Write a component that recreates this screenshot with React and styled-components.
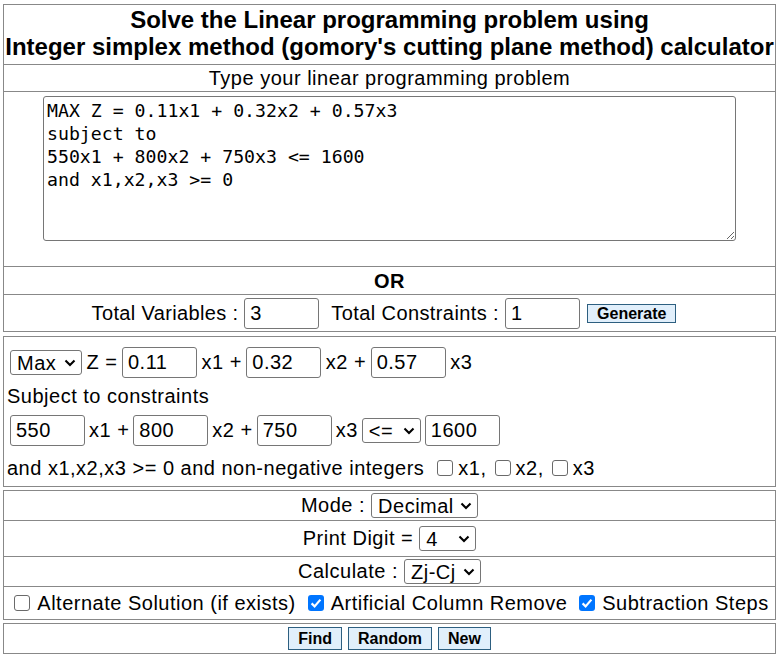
import React from "react"
import styled, { createGlobalStyle } from "styled-components"

const problemText = `MAX Z = 0.11x1 + 0.32x2 + 0.57x3
subject to
550x1 + 800x2 + 750x3 <= 1600
and x1,x2,x3 >= 0`

const Chevron = () => (
  <ChevronSvg viewBox="0 0 12 8" width="12" height="8">
    <path d="M1.5 1.5 L6 6 L10.5 1.5" fill="none" stroke="#000" strokeWidth="2.1" />
  </ChevronSvg>
)

const Dropdown = ({ width, value, options }) => (
  <SelectWrap $width={width}>
    <Select defaultValue={value}>
      {options.map(o => (
        <option key={o}>{o}</option>
      ))}
    </Select>
    <Chevron />
  </SelectWrap>
)

const Check = ({ checked }) => (
  <CheckBox $checked={checked}>
    {checked && (
      <svg viewBox="0 0 16 16" width="16" height="16">
        <path d="M3.6 8.4 L6.6 11.4 L12.4 4.6" fill="none" stroke="#fff" strokeWidth="2.2" />
      </svg>
    )}
  </CheckBox>
)

export default function App() {
  return (
    <>
      <GlobalStyle />
      <Page>
        <Panel>
          <TitleRow>
            Solve the Linear programming problem using
            <br />
            Integer simplex method (gomory's cutting plane method) calculator
          </TitleRow>
          <TextRow $height={26}>Type your linear programming problem</TextRow>
          <AreaRow>
            <ProblemArea defaultValue={problemText} spellCheck={false} />
          </AreaRow>
          <TextRow $height={27} $bold>
            OR
          </TextRow>
          <SizeRow>
            <Label $tight>Total Variables :</Label>
            <NumInput defaultValue="3" />
            <Spaced>Total Constraints :</Spaced>
            <NumInput defaultValue="1" />
            <GenerateButton>Generate</GenerateButton>
          </SizeRow>
        </Panel>

        <Panel $gap={4}>
          <ModelBlock>
            <InputLine $gap={4.5}>
              <Dropdown width={72} value="Max" options={["Max", "Min"]} />
              <span>Z =</span>
              <NumInput defaultValue="0.11" />
              <span>x1 +</span>
              <NumInput defaultValue="0.32" />
              <span>x2 +</span>
              <NumInput defaultValue="0.57" />
              <span>x3</span>
            </InputLine>
            <TextLine $top={6}>Subject to constraints</TextLine>
            <InputLine $top={7} $gap={4}>
              <NumInput defaultValue="550" />
              <span>x1 +</span>
              <NumInput defaultValue="800" />
              <span>x2 +</span>
              <NumInput defaultValue="750" />
              <span>x3</span>
              <Dropdown width={59} value="<=" options={["<=", ">=", "="]} />
              <NumInput defaultValue="1600" />
            </InputLine>
            <TextLine $top={10}>
              <span>and x1,x2,x3 &gt;= 0 and non-negative integers</span>
              <CheckItem $first>
                <Check />x1,
              </CheckItem>
              <CheckItem>
                <Check />x2,
              </CheckItem>
              <CheckItem>
                <Check />x3
              </CheckItem>
            </TextLine>
          </ModelBlock>
        </Panel>

        <Panel $gap={3}>
          <OptionRow $height={29}>
            <span>Mode :</span>
            <Dropdown width={107} value="Decimal" options={["Decimal", "Fraction"]} />
          </OptionRow>
          <OptionRow $height={35}>
            <span>Print Digit =</span>
            <Dropdown width={57} value="4" options={["2", "3", "4", "5", "6"]} />
          </OptionRow>
          <OptionRow $height={29}>
            <span>Calculate :</span>
            <Dropdown width={77} value="Zj-Cj" options={["Zj-Cj", "Cj-Zj"]} />
          </OptionRow>
          <FlagRow>
            <FlagItem>
              <Check />
              Alternate Solution (if exists)
            </FlagItem>
            <FlagItem>
              <Check checked />
              Artificial Column Remove
            </FlagItem>
            <FlagItem>
              <Check checked />
              Subtraction Steps
            </FlagItem>
          </FlagRow>
        </Panel>

        <Panel $gap={3}>
          <ButtonRow>
            <ActionButton>Find</ActionButton>
            <ActionButton>Random</ActionButton>
            <ActionButton>New</ActionButton>
          </ButtonRow>
        </Panel>
      </Page>
    </>
  )
}

// styled components

const GlobalStyle = createGlobalStyle`
  body {
    margin: 0;
    background: #fff;
    color: #000;
    font-family: "Liberation Sans", Arial, sans-serif;
    font-size: 20px;
    letter-spacing: 0.5px;
  }
`

const Page = styled.div`
  width: 773px;
  padding: 4px 0 0 3px;
`

const Panel = styled.div`
  border: 1px solid #888;
  margin-top: ${props => (props.$gap ? props.$gap : 0)}px;
`

const RowBase = styled.div`
  border-bottom: ${props => (props.$last ? "none" : "1px solid #888")};
`

const TitleRow = styled(RowBase)`
  height: 60px;
  box-sizing: border-box;
  padding-top: 1px;
  text-align: center;
  font-size: 24px;
  font-weight: bold;
  line-height: 27px;
  letter-spacing: 0;
`

const TextRow = styled(RowBase)`
  height: ${props => props.$height}px;
  line-height: ${props => props.$height + 1}px;
  text-align: center;
  font-weight: ${props => (props.$bold ? "bold" : "normal")};
`

const AreaRow = styled(RowBase)`
  height: 175px;
  box-sizing: border-box;
  padding-top: 4px;
  display: flex;
  justify-content: center;
  align-items: flex-start;
`

const ProblemArea = styled.textarea`
  width: 693px;
  height: 145px;
  box-sizing: border-box;
  margin: 0;
  padding: 2px 3px;
  border: 1px solid #767676;
  border-radius: 3px;
  font-family: "DejaVu Sans Mono", "Liberation Mono", monospace;
  font-size: 18.2px;
  line-height: 23px;
  letter-spacing: 0;
  color: #000;
  background: #fff;
  resize: both;
`

const SizeRow = styled.div`
  height: 36px;
  display: flex;
  align-items: center;
  justify-content: center;
  gap: 6px;
  padding-right: 11px;
`

const Label = styled.span`
  letter-spacing: ${props => (props.$tight ? "0.35px" : "0.5px")};
`

const Spaced = styled.span`
  margin-left: 6px;
  letter-spacing: 0.4px;
`

const NumInput = styled.input`
  width: 75px;
  height: 31px;
  box-sizing: border-box;
  margin: 0;
  padding: 0 5px;
  border: 1px solid #767676;
  border-radius: 3px;
  font-family: "Liberation Sans", Arial, sans-serif;
  font-size: 20px;
  letter-spacing: 0.5px;
  color: #000;
  background: #fff;
`

const GenerateButton = styled.button`
  margin-left: 1px;
  height: 19px;
  padding: 0 9px;
  border: 1px solid #2d5f80;
  background: #e1effb;
  font-family: "Liberation Sans", Arial, sans-serif;
  font-size: 16px;
  font-weight: bold;
  line-height: 17px;
  color: #000;
`

const SelectWrap = styled.span`
  position: relative;
  display: inline-flex;
  width: ${props => props.$width}px;
  height: 25px;
`

const Select = styled.select`
  appearance: none;
  width: 100%;
  height: 25px;
  margin: 0;
  padding: 0 0 0 6px;
  border: 1px solid #767676;
  border-radius: 3px;
  background: #fff;
  font-family: "Liberation Sans", Arial, sans-serif;
  font-size: 20px;
  letter-spacing: 0.5px;
  color: #000;
`

const ChevronSvg = styled.svg`
  position: absolute;
  right: 6px;
  top: 9px;
  pointer-events: none;
`

const ModelBlock = styled.div`
  height: 149px;
  box-sizing: border-box;
  padding: 10px 0 0 3px;
`

const InputLine = styled.div`
  display: flex;
  align-items: center;
  gap: ${props => props.$gap}px;
  height: 31px;
  padding-left: 3px;
  margin-top: ${props => (props.$top ? props.$top : 0)}px;
`

const TextLine = styled.div`
  display: flex;
  align-items: center;
  height: 24px;
  margin-top: ${props => (props.$top ? props.$top : 0)}px;
`

const CheckItem = styled.span`
  display: inline-flex;
  align-items: center;
  gap: 5px;
  margin-left: ${props => (props.$first ? 13 : 8)}px;
`

const CheckBox = styled.span`
  display: inline-flex;
  flex-shrink: 0;
  align-items: center;
  justify-content: center;
  width: 16px;
  height: 16px;
  box-sizing: border-box;
  border-radius: 3px;
  border: ${props => (props.$checked ? "none" : "1px solid #6a6a6a")};
  background: ${props => (props.$checked ? "#0075ff" : "#fff")};
`

const OptionRow = styled(RowBase)`
  height: ${props => props.$height}px;
  display: flex;
  align-items: center;
  justify-content: center;
  gap: 6px;
`

const FlagRow = styled.div`
  height: 32px;
  display: flex;
  align-items: center;
  justify-content: center;
  padding-left: 4px;
`

const FlagItem = styled.span`
  display: inline-flex;
  flex-shrink: 0;
  align-items: center;
  gap: 7px;
  margin: 0 6px;
  white-space: nowrap;
`

const ButtonRow = styled.div`
  height: 29px;
  display: flex;
  align-items: center;
  justify-content: center;
  gap: 6px;
`

const ActionButton = styled.button`
  height: 23px;
  padding: 0 9px;
  border: 1px solid #2d5f80;
  background: #e1effb;
  font-family: "Liberation Sans", Arial, sans-serif;
  font-size: 16px;
  font-weight: bold;
  color: #000;
`
